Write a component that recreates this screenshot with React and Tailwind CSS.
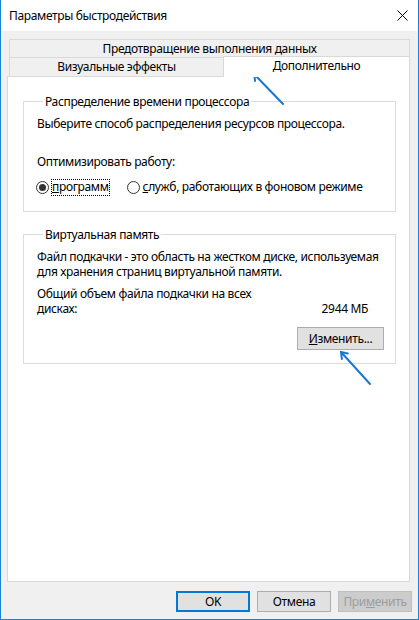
const Radio = ({ checked, children, focused }) => (
  <div className="flex items-center">
    <div className="w-[13px] h-[13px] rounded-full border border-[#333333] bg-white flex items-center justify-center">
      {checked && <div className="w-[7px] h-[7px] rounded-full bg-[#333333]" />}
    </div>
    <div
      className={
        'ml-[2px] h-[17px] px-[1px] leading-[15px] whitespace-nowrap ' +
        (focused ? 'outline outline-1 outline-dotted outline-black -outline-offset-1' : '')
      }
    >
      {children}
    </div>
  </div>
);

const GroupBox = ({ title, className, children }) => (
  <div className={'border border-[#dcdcdc] ' + className}>
    <div className="-mt-[8px] ml-[6px] w-fit bg-white px-[2px] h-[15px] leading-[15px]">{title}</div>
    {children}
  </div>
);

const Arrows = () => (
  <svg
    className="absolute inset-0 pointer-events-none"
    width="419"
    height="620"
    viewBox="0 0 419 620"
    fill="none"
    stroke="#1a78d4"
    strokeWidth="2"
    strokeLinecap="round"
  >
    <path d="M282 104 L253 74 M254.1 80.9 L253 74 L259.9 75.3" />
    <path d="M369 384 L340 352 M340.9 359 L340 352 L346.8 353.5" />
  </svg>
);

export default function App() {
  return (
    <div className="relative w-[419px] h-[620px] flex flex-col bg-[#f0f0f0] border-x border-b border-[#1883d7] font-['Noto_Sans',sans-serif] text-[12px] tracking-[-0.35px] text-black">
      {/* title bar */}
      <div className="h-[31px] bg-white flex items-center justify-between pl-[8px] pr-[10px]">
        <span>Параметры быстродействия</span>
        <svg width="11" height="11" viewBox="0 0 11 11" stroke="#000" strokeWidth="1">
          <path d="M0.5 0.5 L10.5 10.5 M10.5 0.5 L0.5 10.5" />
        </svg>
      </div>

      <div className="flex-1 flex flex-col pl-[6px] pr-[8px]">
        {/* tabs */}
        <div className="mt-[8px] ml-[2px] h-[18px] border-t border-x border-[#d9d9d9] flex items-center justify-center leading-[16px]">
          Предотвращение выполнения данных
        </div>
        <div className="ml-[2px] flex h-[19px] items-start">
          <div className="w-[214px] h-[19px] border-t border-l border-[#d9d9d9] flex items-center justify-center leading-[16px]">
            Визуальные эффекты
          </div>
          <div className="relative z-10 flex-1 -mt-px h-[21px] bg-white border-t border-x border-[#d9d9d9] flex items-center justify-center leading-[16px] pb-[2px]">
            Дополнительно
          </div>
        </div>

        {/* panel */}
        <div className="h-[506px] bg-white border border-[#d9d9d9] pt-[24px] pl-[15px] pr-[13px]">
          <GroupBox title="Распределение времени процессора" className="pl-[13px] pb-[15px]">
            <div className="mt-[7px] leading-[15px] whitespace-nowrap">Выберите способ распределения ресурсов процессора.</div>
            <div className="mt-[23px] leading-[15px]">Оптимизировать работу:</div>
            <div className="mt-[10px] -ml-px flex items-center h-[17px]">
              <Radio checked focused>
                <u>п</u>рограмм
              </Radio>
              <div className="ml-[17px]">
                <Radio>
                  <u>с</u>лужб, работающих в фоновом режиме
                </Radio>
              </div>
            </div>
          </GroupBox>

          <GroupBox title="Виртуальная память" className="mt-[22px] pl-[13px] pr-[11px] pb-[13px] flex flex-col">
            <div className="mt-[7px] leading-[15px] whitespace-nowrap">
              Файл подкачки - это область на жестком диске, используемая
              <br />
              для хранения страниц виртуальной памяти.
            </div>
            <div className="mt-[7px] flex items-end leading-[15px]">
              <div className="whitespace-nowrap">
                Общий объем файла подкачки на всех
                <br />
                дисках:
              </div>
              <div className="ml-auto mr-[16px] whitespace-nowrap">2944 МБ</div>
            </div>
            <button className="mt-[11px] self-end w-[87px] h-[23px] bg-[#e1e1e1] border border-[#adadad] leading-[15px]">
              <u>И</u>зменить...
            </button>
          </GroupBox>
        </div>

        {/* dialog buttons */}
        <div className="mt-[9px] flex justify-end gap-[7px] -mr-[2px]">
          <button className="w-[74px] h-[21px] bg-[#e1e1e1] border-2 border-[#0078d7] leading-[15px]">OK</button>
          <button className="w-[74px] h-[21px] bg-[#e1e1e1] border border-[#adadad] leading-[15px]">Отмена</button>
          <button className="w-[74px] h-[21px] bg-[#cccccc] border border-[#bfbfbf] text-[#9d9d9d] leading-[15px]">
            При<u>м</u>енить
          </button>
        </div>
      </div>

      <Arrows />
    </div>
  );
}
